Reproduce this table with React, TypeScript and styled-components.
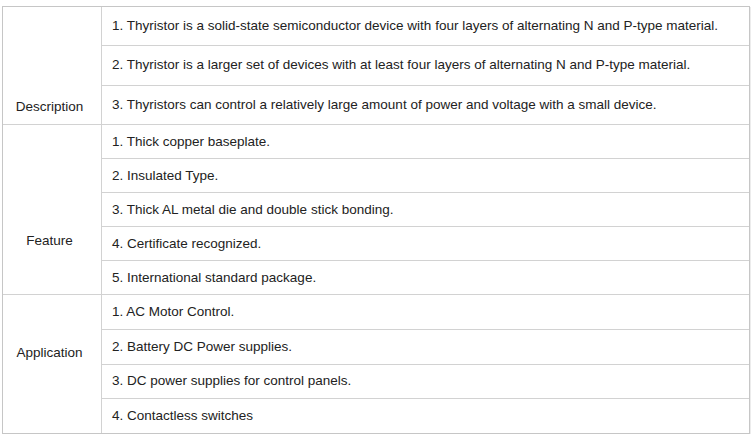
import React from 'react';
import styled, { createGlobalStyle } from 'styled-components';

type Group = {
    label: string;
    height: number;
    labelTop: number;
    items: string[];
};

const groups: Group[] = [
    {
        label: 'Description',
        height: 117,
        labelTop: 92,
        items: [
            '1. Thyristor is a solid-state semiconductor device with four layers of alternating N and P-type material.',
            '2. Thyristor is a larger set of devices with at least four layers of alternating N and P-type material.',
            '3. Thyristors can control a relatively large amount of power and voltage with a small device.'
        ]
    },
    {
        label: 'Feature',
        height: 169,
        labelTop: 108,
        items: [
            '1. Thick copper baseplate.',
            '2. Insulated Type.',
            '3. Thick AL metal die and double stick bonding.',
            '4. Certificate recognized.',
            '5. International standard package.'
        ]
    },
    {
        label: 'Application',
        height: 138,
        labelTop: 50,
        items: [
            '1. AC Motor Control.',
            '2. Battery DC Power supplies.',
            '3. DC power supplies for control panels.',
            '4. Contactless switches'
        ]
    }
];

const GlobalStyle = createGlobalStyle`
    body {
        margin: 0;
        background: #ffffff;
        font-family: 'Liberation Sans', Arial, sans-serif;
        font-size: 13.5px;
        color: #222222;
    }
`;

const Page = styled.div`
    padding: 6px 4px 0 2px;
`;

const Table = styled.div`
    display: flex;
    flex-direction: column;
    border: 1px solid #c6c6c6;
    box-shadow: 1px 1px 0 #ececec;
`;

const GroupRow = styled.div<{ $height: number }>`
    display: flex;
    height: ${({ $height }) => $height}px;
    & + & {
        border-top: 1px solid #d2d2d2;
    }
`;

const LabelCell = styled.div<{ $top: number }>`
    width: 99px;
    flex-shrink: 0;
    box-sizing: border-box;
    padding-top: ${({ $top }) => $top}px;
    padding-right: 5px;
    text-align: center;
    line-height: 16px;
    border-right: 1px solid #d2d2d2;
`;

const Items = styled.div`
    flex: 1;
    display: flex;
    flex-direction: column;
`;

const ItemRow = styled.div`
    flex: 1;
    display: flex;
    align-items: center;
    padding-left: 10px;
    padding-bottom: 1px;
    & + & {
        border-top: 1px solid #d2d2d2;
    }
`;

export default function App() {
    return (
        <Page>
            <GlobalStyle />
            <Table>
                {groups.map(g => (
                    <GroupRow key={g.label} $height={g.height}>
                        <LabelCell $top={g.labelTop}>{g.label}</LabelCell>
                        <Items>
                            {g.items.map(item => (
                                <ItemRow key={item}>{item}</ItemRow>
                            ))}
                        </Items>
                    </GroupRow>
                ))}
            </Table>
        </Page>
    );
}
